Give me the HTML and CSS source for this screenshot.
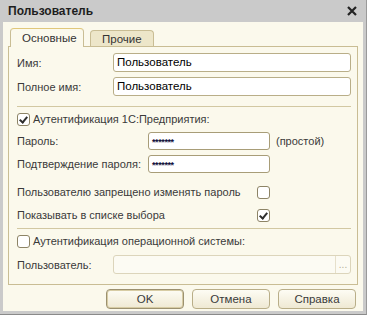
FILE: index.html
```html
<!DOCTYPE html>
<html>
<head>
    <title>Пользователь</title>
    <link rel="stylesheet" href="styles.css">
</head>
<body>

    <div class="window">
        <div class="titlebar">
            <span class="title">Пользователь</span>
            <svg class="close" width="10" height="10" viewBox="0 0 10 10">
                <path d="M1 1 L9 9 M9 1 L1 9" stroke="#222" stroke-width="2.2"/>
            </svg>
        </div>

        <div class="client">
            <div class="tabs">
                <div class="tab active">Основные</div>
                <div class="tab">Прочие</div>
            </div>

            <div class="panel">
                <div class="row field first">
                    <span class="label wide">Имя:</span>
                    <div class="input grow">Пользователь</div>
                </div>
                <div class="row field">
                    <span class="label wide">Полное имя:</span>
                    <div class="input grow">Пользователь</div>
                </div>

                <div class="sep sep1"></div>

                <div class="row check-row">
                    <span class="checkbox checked"></span>
                    <span class="check-label">Аутентификация 1С:Предприятия:</span>
                </div>
                <div class="row pw pw1">
                    <span class="label pwlabel">Пароль:</span>
                    <div class="input short"><span class="stars">*******</span></div>
                    <span class="hint">(простой)</span>
                </div>
                <div class="row pw">
                    <span class="label pwlabel">Подтверждение пароля:</span>
                    <div class="input short"><span class="stars">*******</span></div>
                </div>

                <div class="row flag flag1">
                    <span class="label flaglabel">Пользователю запрещено изменять пароль</span>
                    <span class="checkbox"></span>
                </div>
                <div class="row flag">
                    <span class="label flaglabel">Показывать в списке выбора</span>
                    <span class="checkbox checked"></span>
                </div>

                <div class="sep sep2"></div>

                <div class="row check-row os">
                    <span class="checkbox"></span>
                    <span class="check-label">Аутентификация операционной системы:</span>
                </div>
                <div class="row field user">
                    <span class="label wide">Пользователь:</span>
                    <div class="input grow disabled">
                        <span class="dots">...</span>
                    </div>
                </div>
            </div>

            <div class="buttons">
                <button class="btn default">OK</button>
                <button class="btn">Отмена</button>
                <button class="btn">Справка</button>
            </div>
        </div>
    </div>

</body>
</html>
```

FILE: styles.css
```css
body {
    margin: 0;
    font-family: "Liberation Sans", Arial, sans-serif;
    font-size: 11px;
    color: #3a3a3a;
}

.window {
    width: 367px;
    height: 315px;
    box-sizing: border-box;
    background-color: #cacaca;
    border-bottom: 1px solid #8a8a8a;
    border-right: 1px solid #9a9a9a;
}

.titlebar {
    height: 22px;
    display: flex;
    align-items: center;
    justify-content: space-between;
    padding: 0 9px 0 8px;
}

.title {
    font-size: 12px;
    font-weight: bold;
    color: #1e1e1e;
}

.client {
    margin: 0 3px 0 3px;
    height: 289px;
    background-color: #fbf9ec;
    padding-top: 6px;
    box-sizing: border-box;
    white-space: nowrap;
}

.tabs {
    display: flex;
    align-items: flex-end;
    margin-left: 7px;
    height: 18px;
    position: relative;
    z-index: 1;
    font-size: 11.5px;
}

.tab {
    height: 15px;
    padding: 0 11px;
    margin-right: 6px;
    border: 1px solid #c9bd94;
    border-bottom: none;
    border-radius: 4px 4px 0 0;
    background-color: #ede6c9;
    line-height: 16px;
    color: #333;
}

.tab.active {
    width: 50px;
    height: 18px;
    line-height: 19px;
    background-color: #fbf9ec;
    margin-bottom: -1px;
    border-top-color: #e0c77a;
}

.panel {
    margin: 0 5px;
    height: 239px;
    box-sizing: border-box;
    border: 1px solid #c9bd94;
    padding: 0 6px 0 8px;
}

.row {
    display: flex;
    align-items: center;
}

.label {
    flex-shrink: 0;
}

.field {
    height: 19px;
    margin-top: 5px;
}

.field.first {
    margin-top: 6px;
}

.label.wide {
    width: 96px;
}

.input {
    height: 19px;
    box-sizing: border-box;
    border: 1px solid #b9ae88;
    border-radius: 3px;
    background-color: white;
    color: #000;
    padding-left: 3px;
    line-height: 17px;
    display: flex;
    align-items: center;
    font-size: 11.5px;
}

.grow {
    flex: 1;
}

.sep {
    height: 1px;
    background-color: #d2c8a2;
}

.sep1 {
    margin-top: 10px;
}

.check-row {
    height: 14px;
    margin-top: 5px;
}

.checkbox {
    width: 11px;
    height: 11px;
    border: 1px solid #8d8466;
    border-radius: 3px;
    background-color: white;
    position: relative;
    flex-shrink: 0;
}

.checkbox.checked::after {
    content: "";
    position: absolute;
    left: 3px;
    top: 1px;
    width: 3px;
    height: 6px;
    border: solid #2e2e2e;
    border-width: 0 2px 2px 0;
    transform: rotate(40deg);
}

.check-label {
    margin-left: 3px;
}

.pw {
    height: 18px;
    margin-top: 5px;
}

.pw1 {
    margin-top: 6px;
}

.label.pwlabel {
    width: 131px;
}

.input.short {
    width: 122px;
    height: 18px;
    border-color: #a89d78;
}

.stars {
    font-size: 9px;
    font-weight: bold;
    color: #10103a;
    letter-spacing: -0.4px;
    line-height: 9px;
    margin-top: 2px;
}

.hint {
    margin-left: 6px;
}

.flag {
    height: 14px;
    margin-top: 9px;
}

.flag1 {
    margin-top: 12px;
}

.label.flaglabel {
    width: 240px;
}

.sep2 {
    margin-top: 6px;
}

.os {
    margin-top: 5px;
}

.user {
    margin-top: 7px;
}

.input.disabled {
    background-color: #fcfbf3;
    border-color: #dcd5bb;
    justify-content: flex-end;
    padding-left: 0;
}

.dots {
    width: 14px;
    height: 17px;
    border-left: 1px solid #e6e0cb;
    color: #b5ae98;
    text-align: center;
    line-height: 17px;
    font-size: 10px;
}

.buttons {
    display: flex;
    justify-content: flex-end;
    gap: 8px;
    margin: 4px 7px 0 0;
}

.btn {
    width: 78px;
    height: 20px;
    padding: 0;
    font-family: "Liberation Sans", Arial, sans-serif;
    font-size: 11.5px;
    font-weight: normal;
    color: #3a3a3a;
    border: 1px solid #b9ae88;
    border-radius: 4px;
    background: linear-gradient(#fdfcf4, #efe9d3);
}

.btn.default {
    border-color: #9c9170;
    box-shadow: inset 0 0 0 1px #d7cca4;
}
```
